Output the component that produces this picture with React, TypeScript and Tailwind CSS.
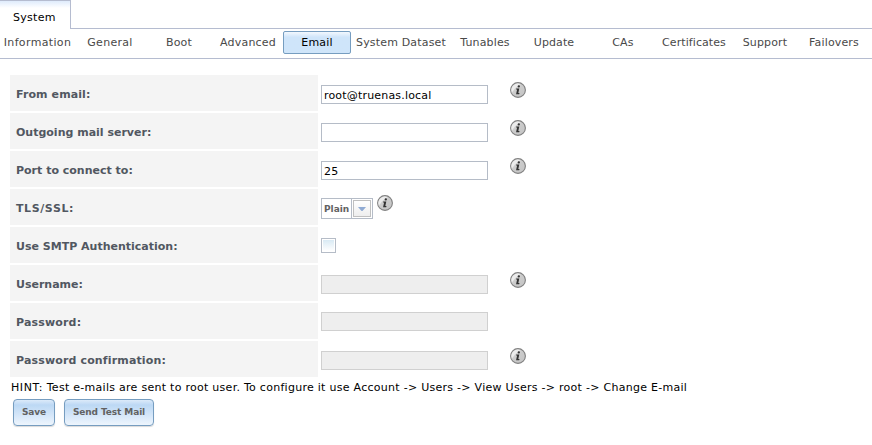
import React from "react";

const tabs = [
  { label: "Information", width: "w-[75px]", tracking: "tracking-[0.35px]" },
  { label: "General", width: "w-[68px]", tracking: "tracking-[0.3px]" },
  { label: "Boot", width: "w-[68px]", tracking: "tracking-[0.2px]" },
  { label: "Advanced", width: "w-[68px]", tracking: "tracking-[0.22px]" },
  { label: "Email", width: "w-[68px]", tracking: "tracking-[0.2px]", active: true },
  { label: "System Dataset", width: "w-[98px]", tracking: "tracking-[0.17px]" },
  { label: "Tunables", width: "w-[68px]", tracking: "tracking-[0.15px]" },
  { label: "Update", width: "w-[68px]", tracking: "tracking-[0.1px]" },
  { label: "CAs", width: "w-[68px]", tracking: "tracking-[0.2px]" },
  { label: "Certificates", width: "w-[72px]", tracking: "tracking-[0.08px]" },
  { label: "Support", width: "w-[68px]", tracking: "tracking-[0.15px]" },
  { label: "Failovers", width: "w-[68px]", tracking: "tracking-[0.15px]" },
];

function InfoIcon({ className = "" }: { className?: string }) {
  return (
    <svg className={`block h-4 w-4 shrink-0 ${className}`} viewBox="0 0 16 16">
      <defs>
        <linearGradient id="info-fill" x1="0" y1="0" x2="1" y2="1">
          <stop offset="0" stopColor="#dedede" />
          <stop offset="0.5" stopColor="#cbcbcb" />
          <stop offset="1" stopColor="#c4c4c4" />
        </linearGradient>
      </defs>
      <circle cx="8" cy="8" r="7.4" fill="url(#info-fill)" stroke="#808080" strokeWidth="1.1" />
      <path d="M1.9 10.5A6.5 6.5 0 0 1 10.5 2.1Q5.5 5.2 1.9 10.5Z" fill="#ececec" />
      <circle cx="8.8" cy="4.4" r="1.15" fill="#333" />
      <path d="M6.2 6.6H9.3L8.3 11.1H9.6L9.1 12.2H6L6.3 11.2L7.1 7.5H6Z" fill="#333" />
    </svg>
  );
}

function Row({ label, tracking = "", children }: { label: string; tracking?: string; children: React.ReactNode }) {
  return (
    <div className="flex h-9 items-start">
      <div className={`flex h-9 w-[308px] shrink-0 items-center bg-[#f4f4f4] pl-1.5 pt-1 font-bold text-[#515761] ${tracking}`}>
        {label}
      </div>
      <div className="flex items-start pl-[3px]">{children}</div>
    </div>
  );
}

function TextField({ value = "", disabled = false, top = "mt-2.5" }: { value?: string; disabled?: boolean; top?: string }) {
  return (
    <input
      type="text"
      defaultValue={value}
      disabled={disabled}
      className={`block h-[19px] w-[167px] rounded-none border px-0.5 pt-0.5 leading-[15px] tracking-[0.18px] outline-none ${top} ${
        disabled ? "border-[#d0d0d0] bg-[#eeeeee]" : "border-[#b5bcc7] bg-white text-black"
      }`}
    />
  );
}

function Button({ label, width }: { label: string; width: string }) {
  return (
    <button
      className={`flex h-[27px] items-center justify-center whitespace-nowrap rounded-[4px] border border-[#769dc0] bg-linear-to-b from-[#dceaf9] from-0% via-[#bcd8f4] via-20% to-[#eef5fd] to-100% text-[9px] font-bold tracking-[-0.1px] text-[#626262] shadow-[0_1px_1px_rgba(0,0,0,0.15)] ${width}`}
    >
      {label}
    </button>
  );
}

export default function App() {
  return (
    <div className="h-[445px] w-[872px] overflow-hidden bg-white font-['DejaVu_Sans',sans-serif] text-[11px] text-black">
      <header className="flex h-[29px]">
        <div className="flex w-[71px] items-center border-r border-t border-[#b5bcd0] bg-linear-to-b from-[#dfebfc] to-white to-[7px] pl-[13px] pt-1.5 tracking-[0.3px]">
          System
        </div>
        <div className="flex-1 border-b border-[#b5bcd0]" />
      </header>
      <nav className="flex h-[30px] gap-px border-b border-[#b5bcd0] pt-0.5">
        {tabs.map((tab) => (
          <div
            key={tab.label}
            className={`flex h-[23px] shrink-0 items-center justify-center whitespace-nowrap pt-0.5 ${tab.width} ${tab.tracking} ${
              tab.active
                ? "rounded-[2px] border border-[#769dc0] bg-linear-to-b from-[#f3f8fe] from-0% via-[#cfe5fa] via-25% to-[#cfe5fa] to-100% text-black"
                : "text-[#494949]"
            }`}
          >
            {tab.label}
          </div>
        ))}
      </nav>
      <main className="pl-2.5 pt-4">
        <div className="flex flex-col gap-0.5">
          <Row label="From email:" tracking="tracking-[0.1px]">
            <TextField value="root@truenas.local" />
            <InfoIcon className="ml-[22px] mt-[7px]" />
          </Row>
          <Row label="Outgoing mail server:">
            <TextField />
            <InfoIcon className="ml-[22px] mt-[7px]" />
          </Row>
          <Row label="Port to connect to:">
            <TextField value="25" />
            <InfoIcon className="ml-[22px] mt-[7px]" />
          </Row>
          <Row label="TLS/SSL:" tracking="tracking-[0.6px]">
            <div className="mt-[9px] flex h-[21px] w-[52px] border border-[#b5bcc7] bg-white">
              <div className="flex w-[30px] items-center border-r border-[#b5bcc7] pl-0.5 pt-[3px] text-[9px] font-bold text-[#626262]">
                Plain
              </div>
              <div className="m-px flex h-[17px] w-[18px] items-center justify-center border border-[#c0c0c0] bg-linear-to-b from-white to-[#eeeeee]">
                <svg className="block h-1 w-2 shrink-0" viewBox="0 0 8 4">
                  <path d="M0 0H8L4.5 4H3.5Z" fill="#8faad3" />
                </svg>
              </div>
            </div>
            <InfoIcon className="ml-1 mt-1.5" />
          </Row>
          <Row label="Use SMTP Authentication:">
            <div className="mt-[11px] h-[15px] w-[15px] border border-[#b5bcc7] bg-white p-px">
              <div className="h-full bg-linear-to-b from-[#d9eaf4] to-white" />
            </div>
          </Row>
          <Row label="Username:">
            <TextField disabled />
            <InfoIcon className="ml-[22px] mt-[7px]" />
          </Row>
          <Row label="Password:" tracking="tracking-[0.17px]">
            <TextField disabled top="mt-[9px]" />
          </Row>
          <Row label="Password confirmation:" tracking="tracking-[0.15px]">
            <TextField disabled />
            <InfoIcon className="ml-[22px] mt-[7px]" />
          </Row>
        </div>
        <p className="h-[22px] whitespace-nowrap pl-px pt-[3px] leading-[15px] tracking-[0.275px]">
          <span className="tracking-[0.6px]">HINT:</span> Test e-mails are sent to root user. To configure it use Account -&gt; Users -&gt; View Users -&gt; root -&gt; Change E-mail
        </p>
        <div className="flex gap-[9px] pl-[3px]">
          <Button label="Save" width="w-[42px]" />
          <Button label="Send Test Mail" width="w-[90px]" />
        </div>
      </main>
    </div>
  );
}
